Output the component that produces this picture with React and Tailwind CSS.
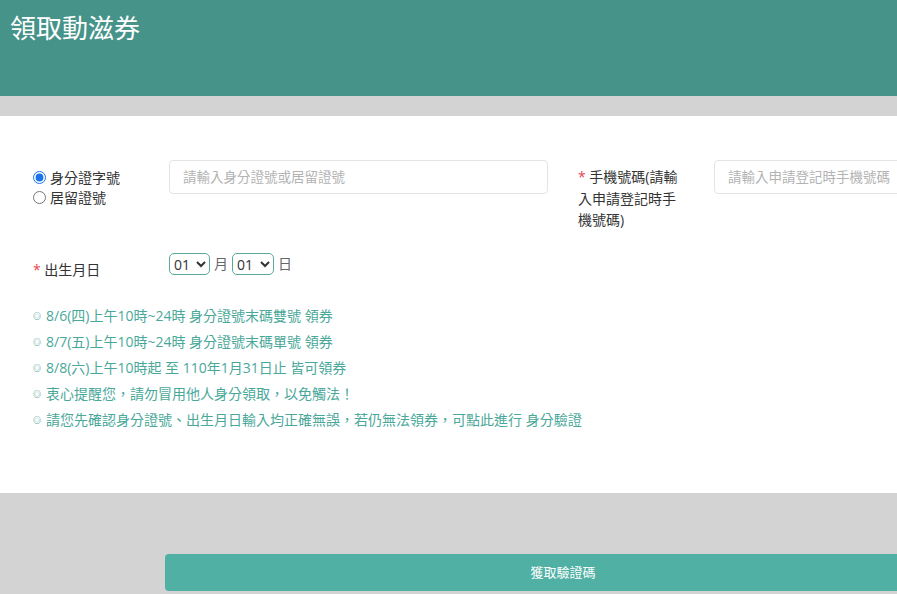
import React from 'react'

const notes = [
  '8/6(四)上午10時~24時 身分證號末碼雙號 領券',
  '8/7(五)上午10時~24時 身分證號末碼單號 領券',
  '8/8(六)上午10時起 至 110年1月31日止 皆可領券',
  '衷心提醒您，請勿冒用他人身分領取，以免觸法！',
  '請您先確認身分證號、出生月日輸入均正確無誤，若仍無法領券，可點此進行 身分驗證',
]

const font = { fontFamily: '"Open Sans", "Noto Sans CJK TC", sans-serif' }

export default function App(){
  return (
    <div className="w-[897px] h-[594px] overflow-hidden bg-[#d3d3d3]" style={font}>
      <header className="h-[96px] bg-[#46938a] px-[10px] pt-[8px]">
        <h1 className="text-white text-[26px] leading-[40px]">領取動滋券</h1>
      </header>
      <div className="h-[20px] bg-[#d3d3d3]" />

      <section className="h-[377px] bg-white pl-[33px] pt-[44px] text-[14px] text-[#333]">
        <div className="flex w-[1100px]">
          <div className="w-[136px] pt-[6px] flex flex-col">
            <label className="flex items-center gap-[4px] h-[22px]">
              <input type="radio" name="idtype" defaultChecked className="w-[13px] h-[13px] m-0 accent-[#1a73e8]" />
              身分證字號
            </label>
            <label className="flex items-center gap-[4px] h-[20px] -mt-[1px]">
              <input type="radio" name="idtype" className="w-[13px] h-[13px] m-0" />
              居留證號
            </label>
          </div>
          <input
            placeholder="請輸入身分證號或居留證號"
            className="w-[379px] h-[34px] border border-[#e4e4e4] rounded-[4px] px-[13px] text-[13.5px] placeholder:text-[#b3b3b3] outline-none"
          />
          <div className="w-[104px] ml-[30px] pt-[6px] leading-[21.5px]">
            <span className="text-[#e8434f]">*</span> 手機號碼(請輸入申請登記時手機號碼)
          </div>
          <input
            placeholder="請輸入申請登記時手機號碼"
            className="ml-[32px] w-[300px] h-[34px] border border-[#e4e4e4] rounded-[4px] px-[13px] text-[13.5px] placeholder:text-[#b3b3b3] outline-none"
          />
        </div>

        <div className="flex mt-[22px] h-[28px]">
          <div className="w-[136px] pt-[7px] leading-[20px]">
            <span className="text-[#e8434f]">*</span> 出生月日
          </div>
          <div className="flex items-start gap-[4px] text-[#666]">
            <select className="h-[22px] w-[41px] border border-[#5aa99c] rounded-[5px] text-[14px] text-[#333] bg-white">
              <option>01</option>
            </select>
            <span className="leading-[22px]">月</span>
            <select className="h-[22px] w-[42px] border border-[#5aa99c] rounded-[5px] text-[14px] text-[#333] bg-white">
              <option>01</option>
            </select>
            <span className="leading-[22px]">日</span>
          </div>
        </div>

        <ul className="mt-[22px] text-[#4aa89a] leading-[26px]">
          {notes.map((n, i) => (
            <li key={i} className="flex items-center">
              <span className="text-[8px] mr-[5px] text-[#3f9c8f] font-bold">◎</span>
              {n}
            </li>
          ))}
        </ul>
      </section>

      <div className="pt-[61px] pl-[165px]">
        <button className="w-[796px] h-[37px] rounded-[4px] bg-[#4fb0a3] text-white text-[13px]">
          獲取驗證碼
        </button>
      </div>
    </div>
  )
}
